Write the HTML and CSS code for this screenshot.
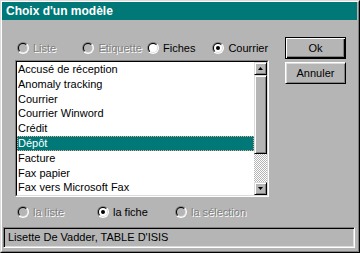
FILE: index.html
```html
<!DOCTYPE html>
<html lang="fr">
<head>
<meta charset="utf-8">
<title>Choix d'un modèle</title>
<link rel="stylesheet" href="styles.css">
</head>
<body>
<div class="window">
  <div class="frame">
    <div class="title">Choix d'un modèle</div>
    <div class="content">
      <div class="main">
        <div class="left">
          <div class="radios top">
            <div class="opt disabled"><span class="radio"><span class="ri"><span class="rf"></span></span></span><span class="lbl">Liste</span></div>
            <div class="opt disabled"><span class="radio"><span class="ri"><span class="rf"></span></span></span><span class="lbl">Etiquette</span></div>
            <div class="opt"><span class="radio"><span class="ri"><span class="rf"></span></span></span><span class="lbl">Fiches</span></div>
            <div class="opt checked"><span class="radio"><span class="ri"><span class="rf"></span></span></span><span class="lbl">Courrier</span></div>
          </div>
          <div class="listbox">
            <div class="lb-inner">
              <ul class="items">
                <li>Accusé de réception</li>
                <li>Anomaly tracking</li>
                <li>Courrier</li>
                <li>Courrier Winword</li>
                <li>Crédit</li>
                <li class="sel">Dépôt</li>
                <li>Facture</li>
                <li>Fax papier</li>
                <li>Fax vers Microsoft Fax</li>
              </ul>
              <div class="scrollbar">
                <div class="sbtn"><svg width="5" height="3" viewBox="0 0 5 3"><polygon points="0,3 5,3 2.5,0" fill="#000"/></svg></div>
                <div class="thumb"></div>
                <div class="track"></div>
                <div class="sbtn"><svg width="5" height="3" viewBox="0 0 5 3"><polygon points="0,0 5,0 2.5,3" fill="#000"/></svg></div>
              </div>
            </div>
          </div>
          <div class="radios bottom">
            <div class="opt disabled"><span class="radio"><span class="ri"><span class="rf"></span></span></span><span class="lbl">la liste</span></div>
            <div class="opt checked"><span class="radio"><span class="ri"><span class="rf"></span></span></span><span class="lbl">la fiche</span></div>
            <div class="opt disabled"><span class="radio"><span class="ri"><span class="rf"></span></span></span><span class="lbl">la sélection</span></div>
          </div>
        </div>
        <div class="right">
          <button class="btn default">Ok</button>
          <button class="btn">Annuler</button>
        </div>
      </div>
      <div class="status">Lisette De Vadder, TABLE D'ISIS</div>
    </div>
  </div>
</div>
</body>
</html>
```
FILE: styles.css
```css
body {
  margin: 0;
  background: #b5b5b5;
  font-family: "Liberation Sans", Arial, sans-serif;
  font-size: 11px;
  color: #000;
}
.window {
  width: 360px;
  height: 253px;
  box-sizing: border-box;
  border: 1px solid;
  border-color: #dcdcdc #000 #000 #dcdcdc;
  background: #b5b5b5;
}
.frame {
  height: 100%;
  box-sizing: border-box;
  border: 1px solid;
  border-color: #fff #808080 #808080 #fff;
  display: flex;
  flex-direction: column;
}
.title {
  height: 18px;
  background: #007878;
  color: #fff;
  font-weight: bold;
  font-size: 12px;
  line-height: 18px;
  padding-left: 4px;
  margin-right: 1px;
}
.content {
  flex: 1;
  display: flex;
  flex-direction: column;
}
.main {
  display: flex;
  padding: 16px 0 0 13px;
}
.left {
  width: 254px;
}
.radios {
  display: grid;
  align-items: center;
  padding-left: 2px;
}
.radios.top {
  height: 24px;
  grid-template-columns: 65.4px 64.6px 65.4px auto;
}
.radios.bottom {
  height: 30px;
  grid-template-columns: 80px 78px auto;
}
.opt {
  display: flex;
  align-items: center;
  gap: 4px;
  white-space: nowrap;
}
.radio {
  display: block;
  width: 12px;
  height: 12px;
  box-sizing: border-box;
  padding: 1px;
  border-radius: 50%;
  background: linear-gradient(135deg, #808080 50%, #fff 50%);
}
.ri {
  display: block;
  width: 10px;
  height: 10px;
  box-sizing: border-box;
  padding: 1px;
  border-radius: 50%;
  background: linear-gradient(135deg, #000 50%, #dcdcdc 50%);
}
.rf {
  display: flex;
  width: 8px;
  height: 8px;
  border-radius: 50%;
  background: #fff;
  align-items: center;
  justify-content: center;
}
.disabled .rf {
  background: #b5b5b5;
}
.checked .rf::after {
  content: "";
  width: 4px;
  height: 4px;
  border-radius: 50%;
  background: #000;
}
.disabled .lbl {
  color: #808080;
  text-shadow: 1px 1px 0 #fff;
}
.listbox {
  height: 137px;
  box-sizing: border-box;
  border: 1px solid;
  border-color: #808080 #fff #fff #808080;
}
.lb-inner {
  height: 100%;
  box-sizing: border-box;
  border: 1px solid;
  border-color: #000 #dcdcdc #dcdcdc #000;
  background: #fff;
  display: flex;
}
.items {
  flex: 1;
  margin: 0;
  padding: 0;
  list-style: none;
}
.items li {
  height: 14.8px;
  line-height: 14.8px;
  padding-left: 1px;
  white-space: nowrap;
}
.items li.sel {
  background: #007878;
  color: #fff;
  outline: 1px dotted #e8a890;
  outline-offset: -1px;
}
.scrollbar {
  width: 13px;
  display: flex;
  flex-direction: column;
}
.sbtn, .thumb {
  box-sizing: border-box;
  border: 1px solid;
  border-color: #dcdcdc #000 #000 #dcdcdc;
  box-shadow: inset 1px 1px #fff, inset -1px -1px #808080;
  background: #b5b5b5;
}
.sbtn {
  height: 13px;
  display: flex;
  align-items: center;
  justify-content: center;
}
.sbtn svg {
  display: block;
}
.thumb {
  height: 79px;
}
.track {
  flex: 1;
  background: repeating-conic-gradient(#fff 0 25%, #b5b5b5 0 50%) 0 0 / 2px 2px;
}
.right {
  margin-left: 16px;
  padding-top: 1px;
  display: flex;
  flex-direction: column;
  gap: 3px;
}
.btn {
  width: 61px;
  height: 22px;
  padding: 0;
  font: inherit;
  color: #000;
  background: #b5b5b5;
  border: 1px solid;
  border-color: #fff #000 #000 #fff;
  box-shadow: inset 1px 1px #dcdcdc, inset -1px -1px #808080;
}
.btn.default {
  border-color: #000;
  box-shadow: inset 1px 1px #fff, inset -1px -1px #000, inset -2px -2px #808080;
}
.status {
  margin: 0 3px 0 1px;
  height: 21px;
  box-sizing: border-box;
  border: 1px solid;
  border-color: #808080 #fff #fff #808080;
  box-shadow: inset 1px 1px #000, inset -1px -1px #dcdcdc;
  padding-left: 4px;
  line-height: 19px;
  white-space: nowrap;
}
```
